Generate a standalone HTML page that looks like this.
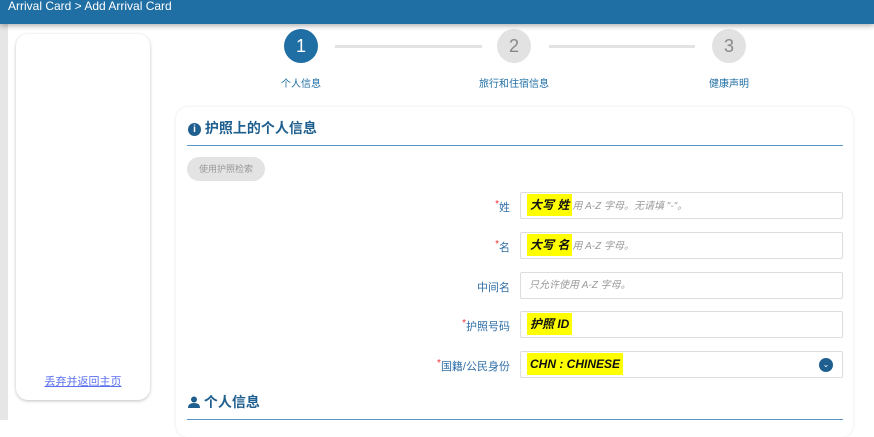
<!DOCTYPE html>
<html><head><meta charset="utf-8"><style>
*{margin:0;padding:0;box-sizing:border-box}
body{width:874px;height:428px;overflow:hidden;background:#fff;font-family:"Liberation Sans","Noto Sans CJK SC",sans-serif;position:relative}
.hdr{position:absolute;left:0;top:0;width:874px;height:24px;background:#1f6ea4;color:#fff;font-size:12px;line-height:13px;padding-left:8px;box-shadow:0 2px 5px rgba(0,0,0,.3);z-index:2}
.strip{position:absolute;left:0;top:24px;width:8px;height:396px;background:#e6e6e6}
.side{position:absolute;left:16px;top:34px;width:134px;height:366px;background:#fff;border-radius:12px;box-shadow:0 1px 3px rgba(0,0,0,.25)}
.side a{position:absolute;left:0;width:134px;top:339px;text-align:center;font-size:11px;color:#5a6ff0;text-decoration:underline}
.c{position:absolute;width:34px;height:34px;border-radius:50%;text-align:center;line-height:34px;font-size:18px;color:#888;background:#e2e2e2}
.c.a{background:#1f6ea4;color:#fff}
.ln{position:absolute;top:45px;height:3px;background:#e3e3e3}
.sl{position:absolute;top:75px;font-size:10px;color:#1f6ea4;text-align:center;width:120px}
.card{position:absolute;left:176px;top:107px;width:677px;height:330px;background:#fff;border-radius:12px;box-shadow:0 0 3px rgba(0,0,0,.1)}
.t{position:absolute;left:188px;font-size:14px;font-weight:bold;color:#1f5f8f}
.div{position:absolute;left:187px;width:656px;height:1px;background:#5d95c6}
.btn{position:absolute;left:187px;top:157px;width:78px;height:24px;border-radius:12px;background:#e3e3e3;color:#999;font-size:9px;text-align:center;line-height:24px}
.lb{position:absolute;right:364px;font-size:11px;color:#2f6fa8;text-align:right}
.lb i{color:#e33;font-style:normal;font-size:10px;vertical-align:4px}
.in{position:absolute;left:520px;width:323px;height:27px;border:1px solid #ddd;border-radius:2px;font-size:10px;color:#999;font-style:italic;line-height:25px;padding-left:8px}
.hl{background:#ffff00;color:#111;font-weight:bold;font-style:italic;font-size:12px;padding:4px 3px;margin-left:-2px}
</style></head><body>
<div class="hdr">Arrival Card &gt; Add Arrival Card</div>
<div class="strip"></div>
<div class="side"><a>丢弃并返回主页</a></div>
<div class="ln" style="left:335px;width:147px"></div>
<div class="ln" style="left:549px;width:146px"></div>
<div class="c a" style="left:284px;top:29px">1</div>
<div class="c" style="left:497px;top:29px">2</div>
<div class="c" style="left:712px;top:29px">3</div>
<div class="sl" style="left:241px">个人信息</div>
<div class="sl" style="left:454px">旅行和住宿信息</div>
<div class="sl" style="left:669px">健康声明</div>
<div class="card"></div>
<div class="t" style="top:118px"><span style="display:inline-block;width:13px;height:13px;border-radius:50%;background:#1f5f8f;color:#fff;font-size:10px;text-align:center;line-height:13px;vertical-align:1px">i</span> 护照上的个人信息</div>
<div class="div" style="top:145px"></div>
<div class="btn">使用护照检索</div>
<div class="lb" style="top:199px"><i>*</i>姓</div>
<div class="in" style="top:192px"><span class="hl">大写 姓</span>用 A-Z 字母。无请填 "-"。</div>
<div class="lb" style="top:239px"><i>*</i>名</div>
<div class="in" style="top:232px"><span class="hl">大写 名</span>用 A-Z 字母。</div>
<div class="lb" style="top:279px">中间名</div>
<div class="in" style="top:272px">只允许使用 A-Z 字母。</div>
<div class="lb" style="top:318px"><i>*</i>护照号码</div>
<div class="in" style="top:311px"><span class="hl">护照 ID</span></div>
<div class="lb" style="top:358px"><i>*</i>国籍/公民身份</div>
<div class="in" style="top:351px"><span class="hl">CHN : CHINESE</span><span style="position:absolute;right:9px;top:6px;width:14px;height:14px;border-radius:50%;background:#1f5f8f;color:#fff;font-size:8px;text-align:center;line-height:14px;font-style:normal">⌄</span></div>
<div class="t" style="top:392px"><svg width="12" height="12" viewBox="0 0 12 12" style="vertical-align:-1px"><circle cx="6" cy="3.5" r="3" fill="#1f5f8f"/><path d="M0 12 Q0 7 6 7 Q12 7 12 12Z" fill="#1f5f8f"/></svg> 个人信息</div>
<div class="div" style="top:419px"></div>
</body></html>
